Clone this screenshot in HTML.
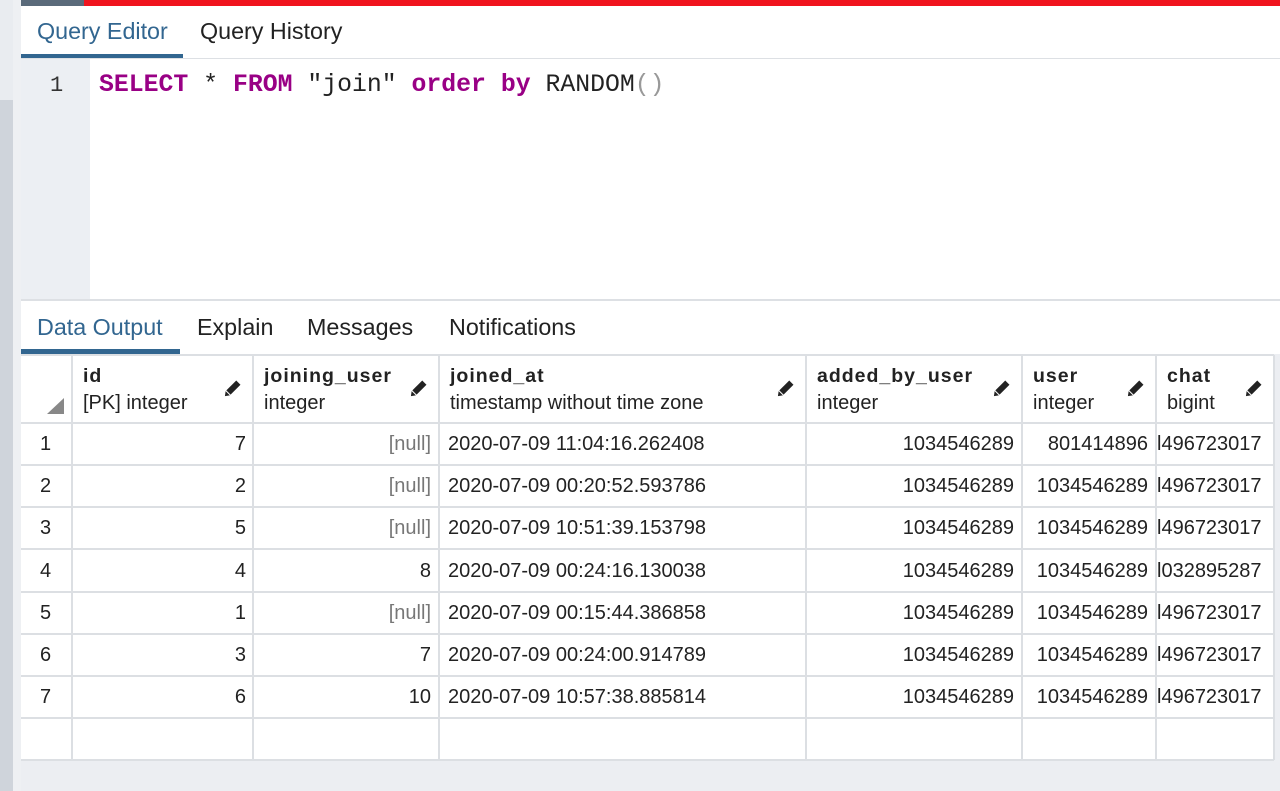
<!DOCTYPE html>
<html><head><meta charset="utf-8"><style>
*{margin:0;padding:0;box-sizing:border-box}
body{width:1280px;height:791px;overflow:hidden;background:#fff;font-family:"Liberation Sans",sans-serif;position:relative;color:#222}
.a{position:absolute}
.tab{position:absolute;font-size:23.3px;color:#222}
.cell{position:absolute;font-size:20px;color:#222;white-space:nowrap}
.hn{font-weight:bold;letter-spacing:1px;font-size:19.5px}
.ht{font-size:20px}
b{font-weight:bold}
</style></head><body>
<div class="a" style="left:0;top:0;width:13px;height:791px;background:#e9ecf0"></div>
<div class="a" style="left:0;top:100px;width:13px;height:691px;background:#cfd4db"></div>
<div class="a" style="left:13px;top:0;width:8px;height:791px;background:#eef0f3"></div>
<div class="a" style="left:21px;top:0;width:63px;height:6px;background:#5a6a7a"></div>
<div class="a" style="left:84px;top:0;width:1196px;height:6px;background:#f0141e"></div>
<div class="tab" style="left:37px;top:18px;color:#326690">Query Editor</div>
<div class="tab" style="left:200px;top:18px">Query History</div>
<div class="a" style="left:21px;top:54px;width:162px;height:4px;background:#326690"></div>
<div class="a" style="left:21px;top:58px;width:1259px;height:1px;background:#dde0e4"></div>
<div class="a" style="left:21px;top:59px;width:69px;height:241px;background:#eceff3"></div>
<div class="a" style="left:50px;top:73px;font-family:'Liberation Mono',monospace;font-size:22px;color:#333">1</div>
<div class="a" style="left:99px;top:71px;font-family:'Liberation Mono',monospace;font-size:24.8px;white-space:pre;color:#222"><b style="color:#990085">SELECT</b> * <b style="color:#990085">FROM</b> "join" <b style="color:#990085">order by</b> RANDOM<span style="color:#999">()</span></div>
<div class="a" style="left:21px;top:299px;width:1259px;height:2px;background:#dde0e4"></div>
<div class="tab" style="left:37px;top:314px;color:#326690">Data Output</div>
<div class="tab" style="left:197px;top:314px">Explain</div>
<div class="tab" style="left:307px;top:314px">Messages</div>
<div class="tab" style="left:449px;top:314px">Notifications</div>
<div class="a" style="left:21px;top:349px;width:159px;height:5px;background:#326690"></div>
<div class="a" style="left:21px;top:354px;width:1259px;height:437px;background:#eceef2"></div>
<svg class="a" style="left:0;top:0" width="1280" height="791">
<rect x="21" y="355" width="1253" height="405" fill="#fff"/>
<g stroke="#dcdfe3" stroke-width="2">
<line x1="21" y1="355" x2="1274" y2="355"/>
<line x1="21" y1="423" x2="1274" y2="423"/>
<line x1="21" y1="465" x2="1274" y2="465"/>
<line x1="21" y1="507" x2="1274" y2="507"/>
<line x1="21" y1="549" x2="1274" y2="549"/>
<line x1="21" y1="592" x2="1274" y2="592"/>
<line x1="21" y1="634" x2="1274" y2="634"/>
<line x1="21" y1="676" x2="1274" y2="676"/>
<line x1="21" y1="718" x2="1274" y2="718"/>
<line x1="21" y1="760" x2="1274" y2="760"/>
<line x1="72" y1="355" x2="72" y2="760"/>
<line x1="253" y1="355" x2="253" y2="760"/>
<line x1="439" y1="355" x2="439" y2="760"/>
<line x1="806" y1="355" x2="806" y2="760"/>
<line x1="1022" y1="355" x2="1022" y2="760"/>
<line x1="1156" y1="355" x2="1156" y2="760"/>
<line x1="1274" y1="355" x2="1274" y2="760"/>
</g>
<polygon points="47,414 64,414 64,398" fill="#888"/>
<g fill="#222">
<g transform="translate(232,389) rotate(45)"><rect x="-3" y="-9" width="6" height="14"/><polygon points="-3,6 3,6 0,10"/></g>
<g transform="translate(418,389) rotate(45)"><rect x="-3" y="-9" width="6" height="14"/><polygon points="-3,6 3,6 0,10"/></g>
<g transform="translate(785,389) rotate(45)"><rect x="-3" y="-9" width="6" height="14"/><polygon points="-3,6 3,6 0,10"/></g>
<g transform="translate(1001,389) rotate(45)"><rect x="-3" y="-9" width="6" height="14"/><polygon points="-3,6 3,6 0,10"/></g>
<g transform="translate(1135,389) rotate(45)"><rect x="-3" y="-9" width="6" height="14"/><polygon points="-3,6 3,6 0,10"/></g>
<g transform="translate(1253,389) rotate(45)"><rect x="-3" y="-9" width="6" height="14"/><polygon points="-3,6 3,6 0,10"/></g>
</g>
</svg>
<div class="cell hn" style="left:83px;top:365px">id</div><div class="cell ht" style="left:83px;top:392px">[PK] integer</div>
<div class="cell hn" style="left:264px;top:365px">joining_user</div><div class="cell ht" style="left:264px;top:392px">integer</div>
<div class="cell hn" style="left:450px;top:365px">joined_at</div><div class="cell ht" style="left:450px;top:392px">timestamp without time zone</div>
<div class="cell hn" style="left:817px;top:365px">added_by_user</div><div class="cell ht" style="left:817px;top:392px">integer</div>
<div class="cell hn" style="left:1033px;top:365px">user</div><div class="cell ht" style="left:1033px;top:392px">integer</div>
<div class="cell hn" style="left:1167px;top:365px">chat</div><div class="cell ht" style="left:1167px;top:392px">bigint</div>
<div class="cell" style="left:40px;top:433px">1</div><div class="cell" style="left:72px;width:174px;text-align:right;top:433px">7</div><div class="cell" style="left:253px;width:178px;text-align:right;top:433px;color:#777">[null]</div><div class="cell" style="left:448px;top:433px">2020-07-09 11:04:16.262408</div><div class="cell" style="left:806px;width:208px;text-align:right;top:433px">1034546289</div><div class="cell" style="left:1022px;width:126px;text-align:right;top:433px">801414896</div><div class="cell" style="left:1157px;top:433px">l496723017</div>
<div class="cell" style="left:40px;top:475px">2</div><div class="cell" style="left:72px;width:174px;text-align:right;top:475px">2</div><div class="cell" style="left:253px;width:178px;text-align:right;top:475px;color:#777">[null]</div><div class="cell" style="left:448px;top:475px">2020-07-09 00:20:52.593786</div><div class="cell" style="left:806px;width:208px;text-align:right;top:475px">1034546289</div><div class="cell" style="left:1022px;width:126px;text-align:right;top:475px">1034546289</div><div class="cell" style="left:1157px;top:475px">l496723017</div>
<div class="cell" style="left:40px;top:517px">3</div><div class="cell" style="left:72px;width:174px;text-align:right;top:517px">5</div><div class="cell" style="left:253px;width:178px;text-align:right;top:517px;color:#777">[null]</div><div class="cell" style="left:448px;top:517px">2020-07-09 10:51:39.153798</div><div class="cell" style="left:806px;width:208px;text-align:right;top:517px">1034546289</div><div class="cell" style="left:1022px;width:126px;text-align:right;top:517px">1034546289</div><div class="cell" style="left:1157px;top:517px">l496723017</div>
<div class="cell" style="left:40px;top:560px">4</div><div class="cell" style="left:72px;width:174px;text-align:right;top:560px">4</div><div class="cell" style="left:253px;width:178px;text-align:right;top:560px">8</div><div class="cell" style="left:448px;top:560px">2020-07-09 00:24:16.130038</div><div class="cell" style="left:806px;width:208px;text-align:right;top:560px">1034546289</div><div class="cell" style="left:1022px;width:126px;text-align:right;top:560px">1034546289</div><div class="cell" style="left:1157px;top:560px">l032895287</div>
<div class="cell" style="left:40px;top:602px">5</div><div class="cell" style="left:72px;width:174px;text-align:right;top:602px">1</div><div class="cell" style="left:253px;width:178px;text-align:right;top:602px;color:#777">[null]</div><div class="cell" style="left:448px;top:602px">2020-07-09 00:15:44.386858</div><div class="cell" style="left:806px;width:208px;text-align:right;top:602px">1034546289</div><div class="cell" style="left:1022px;width:126px;text-align:right;top:602px">1034546289</div><div class="cell" style="left:1157px;top:602px">l496723017</div>
<div class="cell" style="left:40px;top:644px">6</div><div class="cell" style="left:72px;width:174px;text-align:right;top:644px">3</div><div class="cell" style="left:253px;width:178px;text-align:right;top:644px">7</div><div class="cell" style="left:448px;top:644px">2020-07-09 00:24:00.914789</div><div class="cell" style="left:806px;width:208px;text-align:right;top:644px">1034546289</div><div class="cell" style="left:1022px;width:126px;text-align:right;top:644px">1034546289</div><div class="cell" style="left:1157px;top:644px">l496723017</div>
<div class="cell" style="left:40px;top:686px">7</div><div class="cell" style="left:72px;width:174px;text-align:right;top:686px">6</div><div class="cell" style="left:253px;width:178px;text-align:right;top:686px">10</div><div class="cell" style="left:448px;top:686px">2020-07-09 10:57:38.885814</div><div class="cell" style="left:806px;width:208px;text-align:right;top:686px">1034546289</div><div class="cell" style="left:1022px;width:126px;text-align:right;top:686px">1034546289</div><div class="cell" style="left:1157px;top:686px">l496723017</div>
</body></html>
